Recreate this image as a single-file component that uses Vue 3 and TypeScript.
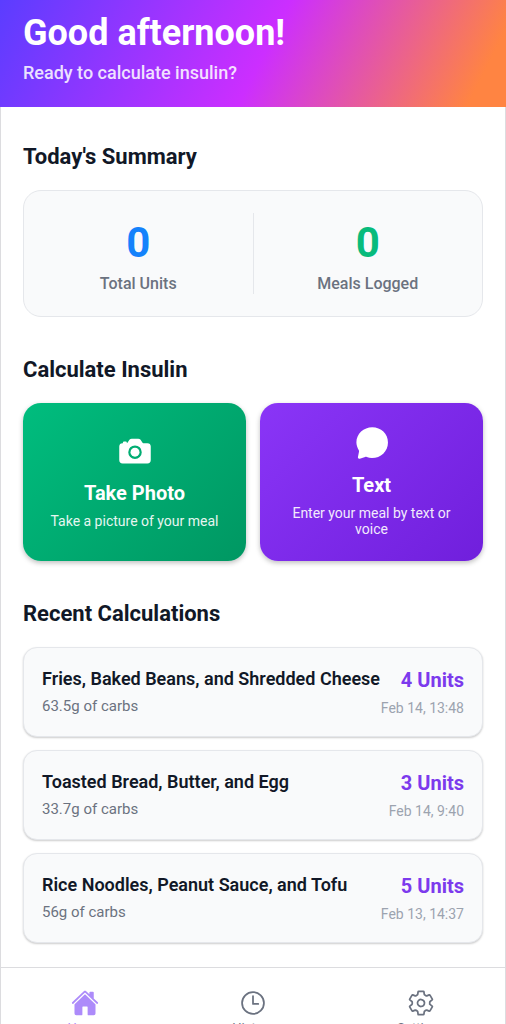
<script setup lang="ts">
interface Calculation {
  meal: string
  carbs: string
  units: number
  date: string
}

interface Stat {
  label: string
  value: number
  tone: string
}

const stats: Stat[] = [
  { label: 'Total Units', value: 0, tone: 'blue' },
  { label: 'Meals Logged', value: 0, tone: 'green' },
]

const calculations: Calculation[] = [
  { meal: 'Fries, Baked Beans, and Shredded Cheese', carbs: '63.5g', units: 4, date: 'Feb 14, 13:48' },
  { meal: 'Toasted Bread, Butter, and Egg', carbs: '33.7g', units: 3, date: 'Feb 14, 9:40' },
  { meal: 'Rice Noodles, Peanut Sauce, and Tofu', carbs: '56g', units: 5, date: 'Feb 13, 14:37' },
]
</script>

<template>
  <div class="screen">
    <header class="hero">
      <h1>Good afternoon!</h1>
      <p>Ready to calculate insulin?</p>
    </header>

    <main class="content">
      <section>
        <h2>Today's Summary</h2>
        <div class="summary">
          <div v-for="stat in stats" :key="stat.label" class="stat">
            <span class="value" :class="stat.tone">{{ stat.value }}</span>
            <span class="label">{{ stat.label }}</span>
          </div>
        </div>
      </section>

      <section>
        <h2>Calculate Insulin</h2>
        <div class="actions">
          <button type="button" class="action photo">
            <svg viewBox="0 0 512 512" aria-hidden="true">
              <circle cx="256" cy="272" r="64" />
              <path d="M432 144h-59c-3 0-6.72-1.94-9.62-5l-25.94-40.94a15.52 15.52 0 00-1.37-1.85C327.11 85.76 315 80 302 80h-92c-13 0-25.11 5.76-34.07 16.21a15.52 15.52 0 00-1.37 1.85l-25.94 41c-2.22 2.42-5.34 5-8.62 5v-8a16 16 0 00-16-16h-24a16 16 0 00-16 16v8h-4a48.05 48.05 0 00-48 48V384a48.05 48.05 0 0048 48h352a48.05 48.05 0 0048-48V192a48.05 48.05 0 00-48-48zM256 368a96 96 0 1196-96 96.11 96.11 0 01-96 96z" />
            </svg>
            <span class="action-title">Take Photo</span>
            <span class="action-text">Take a picture of your meal</span>
          </button>
          <button type="button" class="action text">
            <svg viewBox="0 0 512 512" aria-hidden="true">
              <path d="M260 32C138 32 34 126 34 247c0 41 13 78 34 112 5 8 4 14 3 22L56 456c-3 18 10 28 26 23l76-25c9-3 15-3 24 1 24 10 46 16 73 16 126 0 228-95 228-222S384 32 260 32z" />
            </svg>
            <span class="action-title">Text</span>
            <span class="action-text">Enter your meal by text or voice</span>
          </button>
        </div>
      </section>

      <section>
        <h2>Recent Calculations</h2>
        <ul class="recent">
          <li v-for="item in calculations" :key="item.date">
            <div class="meal">
              <h3>{{ item.meal }}</h3>
              <p>{{ item.carbs }} of carbs</p>
            </div>
            <div class="result">
              <strong>{{ item.units }} Units</strong>
              <time>{{ item.date }}</time>
            </div>
          </li>
        </ul>
      </section>
    </main>

    <nav class="tabs">
      <a href="#home" class="active">
        <svg viewBox="0 0 512 512" aria-hidden="true">
          <path d="M261.56 101.28a8 8 0 00-11.06 0L66.4 277.15a8 8 0 00-2.47 5.79L63.9 448a32 32 0 0032 32H192a16 16 0 0016-16V328a8 8 0 018-8h80a8 8 0 018 8v136a16 16 0 0016 16h96.06a32 32 0 0032-32V282.94a8 8 0 00-2.47-5.79z" />
          <path d="M490.91 244.15l-74.8-71.56V64a16 16 0 00-16-16h-48a16 16 0 00-16 16v32l-57.92-55.38C272.77 35.14 264.71 32 256 32c-8.68 0-16.72 3.14-22.14 8.63l-212.7 203.5c-6.22 6-7 15.87-1.34 22.37A16 16 0 0043 267.56L250.5 69.28a8 8 0 0111.06 0l207.52 198.28a16 16 0 0022.59-.44c6.14-6.36 5.63-16.86-.76-22.97z" />
        </svg>
        <span>Home</span>
      </a>
      <a href="#history">
        <svg class="outline" viewBox="0 0 512 512" aria-hidden="true">
          <circle cx="256" cy="256" r="200" />
          <path d="M256 128v144h96" />
        </svg>
        <span>History</span>
      </a>
      <a href="#settings">
        <svg class="outline" viewBox="0 0 512 512" aria-hidden="true">
          <path d="M262.29 192.31a64 64 0 1057.4 57.4 64.13 64.13 0 00-57.4-57.4zM416.39 256a154.34 154.34 0 01-1.53 20.79l45.21 35.46a10.81 10.81 0 012.45 13.75l-42.77 74a10.81 10.81 0 01-13.14 4.59l-44.9-18.08a16.11 16.11 0 00-15.17 1.75A164.48 164.48 0 01325 400.8a15.94 15.94 0 00-8.82 12.14l-6.73 47.89a11.08 11.08 0 01-10.68 9.17h-85.54a11.11 11.11 0 01-10.69-8.87l-6.72-47.82a16.07 16.07 0 00-9-12.22 155.3 155.3 0 01-21.46-12.57 16 16 0 00-15.11-1.71l-44.89 18.07a10.81 10.81 0 01-13.14-4.58l-42.77-74a10.8 10.8 0 012.45-13.75l38.21-30a16.05 16.05 0 006-14.08c-.36-4.17-.58-8.33-.58-12.5s.21-8.27.58-12.35a16 16 0 00-6.07-13.94l-38.19-30A10.81 10.81 0 0149.48 186l42.77-74a10.81 10.81 0 0113.14-4.59l44.9 18.08a16.11 16.11 0 0015.17-1.75A164.48 164.48 0 01187 111.2a15.94 15.94 0 008.82-12.14l6.73-47.89A11.08 11.08 0 01213.23 42h85.54a11.11 11.11 0 0110.69 8.87l6.72 47.82a16.07 16.07 0 009 12.22 155.3 155.3 0 0121.46 12.57 16 16 0 0015.11 1.71l44.89-18.07a10.81 10.81 0 0113.14 4.58l42.77 74a10.8 10.8 0 01-2.45 13.75l-38.21 30a16.05 16.05 0 00-6.05 14.08c.33 4.14.55 8.3.55 12.47z" />
        </svg>
        <span>Settings</span>
      </a>
    </nav>
  </div>
</template>

<style>
body {
  margin: 0;
  background: #fff;
}
</style>

<style scoped>
* {
  box-sizing: border-box;
}

.screen {
  height: 100vh;
  overflow: hidden;
  background: #fff;
  color: #111827;
  font-family: Roboto, "Liberation Sans", sans-serif;
}

h1,
h2,
h3,
p {
  margin: 0;
}

.hero {
  padding: 12px 23px 23px;
  background: linear-gradient(117deg, #5b3dff 0%, #cc2eff 52%, #ff8442 93%);
  color: #fff;
}

.hero h1 {
  font-size: 36px;
  line-height: 42px;
  font-weight: 700;
}

.hero p {
  margin-top: 8px;
  font-size: 18px;
  line-height: 22px;
  font-weight: 500;
  opacity: 0.85;
}

.content {
  display: flex;
  flex-direction: column;
  gap: 40px;
  padding: 37px 22px 24px;
  border: solid #dcdcdf;
  border-width: 0 1px;
}

h2 {
  margin-bottom: 20px;
  font-size: 22px;
  line-height: 26px;
  font-weight: 700;
}

.summary {
  display: flex;
  padding: 22px 0;
  border: 1px solid #e5e7eb;
  border-radius: 18px;
  background: #f9fafb;
}

.stat {
  flex: 1;
  display: flex;
  flex-direction: column;
  align-items: center;
  gap: 7px;
  padding-top: 6px;
}

.stat + .stat {
  border-left: 1px solid #e5e7eb;
}

.value {
  font-size: 42px;
  line-height: 48px;
  font-weight: 700;
}

.blue {
  color: #1482fb;
}

.green {
  color: #08bb7c;
}

.label {
  font-size: 16px;
  line-height: 20px;
  font-weight: 500;
  color: #6b7280;
}

.actions {
  display: grid;
  grid-template-columns: 1fr 1fr;
  gap: 14px;
}

.action {
  display: flex;
  flex-direction: column;
  align-items: center;
  justify-content: center;
  min-height: 158px;
  padding: 20px 24px 22px;
  border: 0;
  border-radius: 18px;
  box-shadow: 0 2px 5px rgba(0, 0, 0, 0.25);
  color: #fff;
  font-family: inherit;
  text-align: center;
}

.photo {
  background: linear-gradient(135deg, #00bd7e, #009762);
}

.text {
  background: linear-gradient(135deg, #8a35f7, #701fdc);
}

.action svg {
  width: 36px;
  height: 36px;
  fill: #fff;
}

.action-title {
  margin-top: 12px;
  font-size: 20px;
  line-height: 24px;
  font-weight: 700;
}

.action-text {
  margin-top: 8px;
  font-size: 14px;
  line-height: 16px;
  opacity: 0.9;
}

.recent {
  display: flex;
  flex-direction: column;
  gap: 13px;
  margin: 0;
  padding: 0;
  list-style: none;
}

.recent li {
  display: flex;
  align-items: center;
  justify-content: space-between;
  gap: 2px;
  padding: 19px 18px;
  border: 1px solid #e5e7eb;
  border-radius: 14px;
  background: #f9fafb;
  box-shadow: 0 1px 2px rgba(0, 0, 0, 0.2);
}

h3 {
  font-size: 18px;
  line-height: 22px;
  font-weight: 600;
}

.meal p {
  margin-top: 6px;
  font-size: 15px;
  line-height: 20px;
  color: #6b7280;
}

.result {
  display: flex;
  flex-direction: column;
  align-items: flex-end;
  gap: 6px;
  white-space: nowrap;
}

.result strong {
  font-size: 20px;
  line-height: 26px;
  font-weight: 700;
  color: #7c3aed;
}

.result time {
  font-size: 14px;
  line-height: 18px;
  color: #9ca3af;
}

.meal {
  flex: none;
  max-width: 100%;
}

.result {
  flex: 1 0 0;
  min-width: 0;
}

.tabs {
  display: flex;
  padding: 21px 0 12px;
  border: 1px solid #dcdcdf;
}

.tabs a {
  flex: 1;
  display: flex;
  flex-direction: column;
  align-items: center;
  gap: 4px;
  color: #6b7280;
  font-size: 13px;
  line-height: 14px;
  text-decoration: none;
}

.tabs .active {
  color: #ad8bfa;
}

.tabs svg {
  width: 28px;
  height: 28px;
  fill: currentColor;
}

.tabs .outline {
  fill: none;
  stroke: currentColor;
  stroke-width: 32;
  stroke-linecap: round;
  stroke-linejoin: round;
}
</style>
